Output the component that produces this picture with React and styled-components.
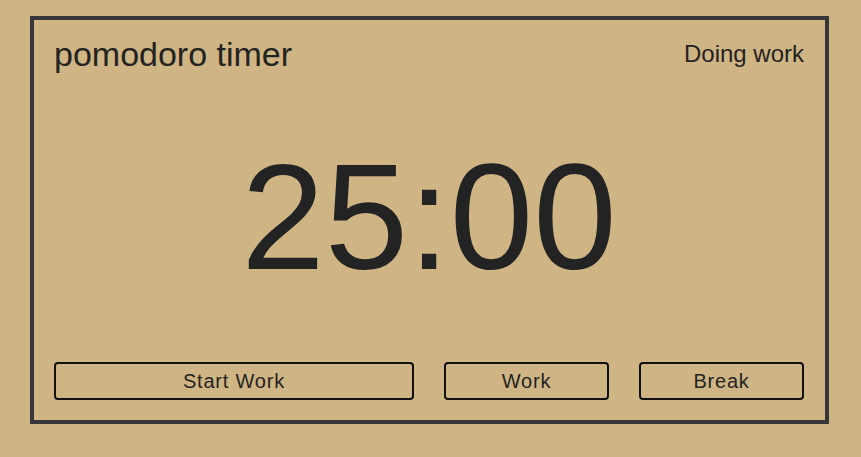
import React from "react";
import styled, { createGlobalStyle } from "styled-components";

const GlobalStyle = createGlobalStyle`
  html, body {
    margin: 0;
    padding: 0;
    background: #d0b584;
  }
  body {
    font-family: "Liberation Sans", Arial, sans-serif;
    color: #232323;
  }
`;

function App() {
  return (
    <Page>
      <GlobalStyle />
      <Panel>
        <Header>
          <Title>pomodoro timer</Title>
          <Status>Doing work</Status>
        </Header>
        <Clock>25:00</Clock>
        <Controls>
          <Button>Start Work</Button>
          <Button>Work</Button>
          <Button>Break</Button>
        </Controls>
      </Panel>
    </Page>
  );
}

const Page = styled.div`
  padding: 16px 30px;
`;

const Panel = styled.div`
  box-sizing: border-box;
  width: 799px;
  height: 408px;
  border: 4px solid #37363a;
  padding: 17px 21px 20px 20px;
  display: flex;
  flex-direction: column;
`;

const Header = styled.div`
  display: flex;
  justify-content: space-between;
  align-items: flex-start;
`;

const Title = styled.h1`
  margin: 0;
  font-size: 34px;
  font-weight: normal;
  line-height: 1;
`;

const Status = styled.span`
  margin-top: 5px;
  font-size: 24px;
  line-height: 1;
`;

const Clock = styled.div`
  flex: 1;
  display: flex;
  align-items: center;
  justify-content: center;
  font-size: 150px;
  line-height: 1;
  color: #232323;
`;

const Controls = styled.div`
  display: grid;
  grid-template-columns: 360px 165px 165px;
  justify-content: space-between;
`;

const Button = styled.button`
  box-sizing: border-box;
  height: 38px;
  background: transparent;
  border: 2px solid #111;
  border-radius: 4px;
  font-family: "Liberation Sans", Arial, sans-serif;
  font-size: 20px;
  letter-spacing: 0.8px;
  color: #232323;
  cursor: pointer;
  padding: 0;
`;

export default App;
